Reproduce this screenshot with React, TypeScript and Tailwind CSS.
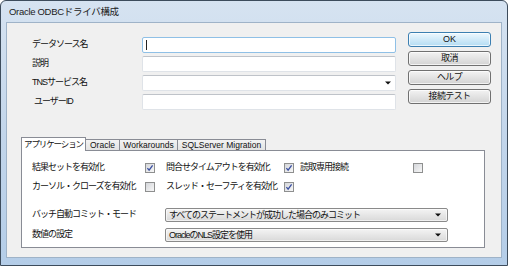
import React from "react";

type CheckRowItem = { label: string; checked: boolean };

const Arrow: React.FC = () => (
  <svg width="6" height="4" viewBox="0 0 6 4" className="shrink-0">
    <path d="M0 0.5h6L3 3.5z" fill="#111" />
  </svg>
);

const Checkbox: React.FC<{ checked: boolean }> = ({ checked }) => (
  <div className="flex h-[10px] w-[10px] shrink-0 items-center justify-center border border-[#8e8f8f] bg-gradient-to-br from-[#d4d6da] to-[#f7f7f7]">
    {checked && (
      <svg width="8" height="8" viewBox="0 0 8 8">
        <path d="M1.4 4.2 L3.1 6.2 L6.6 1.3" stroke="#3a4fa0" strokeWidth="1.3" fill="none" />
      </svg>
    )}
  </div>
);

const DialogButton: React.FC<{ label: string; primary?: boolean }> = ({ label, primary }) => (
  <div
    className={
      primary
        ? "flex h-[15px] w-[83px] items-center justify-center rounded-[3px] border border-[#3c7fb1] bg-gradient-to-b from-[#eef8fe] to-[#b3dcf3] text-[9px] leading-none shadow-[inset_0_0_0_1px_rgba(255,255,255,0.7)]"
        : "flex h-[15px] w-[83px] items-center justify-center rounded-[3px] border border-[#707070] bg-gradient-to-b from-[#f3f3f3] to-[#d3d3d3] text-[9px] leading-none tracking-[-0.6px] shadow-[inset_0_0_0_1px_rgba(255,255,255,0.7)]"
    }
  >
    {label}
  </div>
);

const TextBox: React.FC<{ focused?: boolean; combo?: boolean }> = ({ focused, combo }) => (
  <div
    className={
      focused
        ? "flex h-[16px] w-[254px] items-center rounded-[2px] border border-[#8fc0e6] bg-white px-[3px]"
        : "flex h-[16px] w-[254px] items-center justify-end rounded-[2px] border border-[#dfe3e8] border-t-[#bfc3c9] bg-white px-[4px]"
    }
  >
    {focused && <div className="h-[10px] w-px bg-[#222]" />}
    {combo && <Arrow />}
  </div>
);

const ComboBox: React.FC<{ value: string }> = ({ value }) => (
  <div className="flex h-[14px] w-[283px] items-center justify-between rounded-[2px] border border-[#8a8a8a] bg-gradient-to-b from-[#f4f4f4] to-[#d9d9d9] pl-[3px] pr-[6px] text-[9px] leading-none tracking-[-1px] shadow-[inset_0_0_0_1px_rgba(255,255,255,0.6)]">
    <span className="whitespace-nowrap">{value}</span>
    <Arrow />
  </div>
);

const fields = ["データソース名", "説明", "TNSサービス名", "ユーザーID"];
const buttons = ["OK", "取消", "ヘルプ", "接続テスト"];

const tabs = [
  { label: "アプリケーション", width: "w-[65px]", active: true },
  { label: "Oracle", width: "w-[35px]", active: false },
  { label: "Workarounds", width: "w-[59px]", active: false },
  { label: "SQLServer Migration", width: "w-[89px]", active: false },
];

const row1: CheckRowItem[] = [
  { label: "結果セットを有効化", checked: true },
  { label: "問合せタイムアウトを有効化", checked: true },
  { label: "読取専用接続", checked: false },
];

const row2: CheckRowItem[] = [
  { label: "カーソル・クローズを有効化", checked: false },
  { label: "スレッド・セーフティを有効化", checked: true },
];

const CheckRow: React.FC<{ items: CheckRowItem[] }> = ({ items }) => (
  <div className="flex h-[13px] items-center whitespace-nowrap">
    <span className="w-[113px] shrink-0 tracking-[-1px]">{items[0].label}</span>
    <Checkbox checked={items[0].checked} />
    <span className="ml-[11px] w-[118px] shrink-0 tracking-[-1px]">{items[1].label}</span>
    <Checkbox checked={items[1].checked} />
    {items[2] && (
      <>
        <span className="ml-[6px] w-[113px] shrink-0 tracking-[-1px]">{items[2].label}</span>
        <Checkbox checked={items[2].checked} />
      </>
    )}
  </div>
);

export default function App() {
  return (
    <div className="flex h-[266px] w-[508px] flex-col overflow-hidden rounded-t-[6px] border border-[#3d4c5c] bg-gradient-to-b from-[#d6e3f1] via-[#c3d6eb] to-[#b4cde8] px-[5px] pb-[7px] font-['Liberation_Sans','Noto_Sans_CJK_JP',sans-serif] text-[9px] text-[#111]">
      {/* Title bar */}
      <div className="flex h-[21px] shrink-0 items-center pl-[3px] pt-[2px] text-[9.5px] tracking-[-0.3px] text-[#1b1b1b]">
        Oracle ODBCドライバ構成
      </div>

      {/* Client area */}
      <div className="flex flex-1 flex-col border border-[#9fb3c8] bg-[#f0f0f0]">
        <div className="flex items-start">
          <div className="flex flex-col gap-[3px] pl-[25px] pt-[14px]">
            {fields.map((f, i) => (
              <div key={f} className="flex h-[16px] items-center">
                <span className={i === 3 ? "w-[110px] pl-[2px] tracking-[-1px]" : "w-[110px] tracking-[-1px]"}>{f}</span>
                <TextBox focused={i === 0} combo={i === 2} />
              </div>
            ))}
          </div>
          <div className="ml-[12px] flex flex-col gap-[4px] pt-[9px]">
            {buttons.map((b, i) => (
              <DialogButton key={b} label={b} primary={i === 0} />
            ))}
          </div>
        </div>

        {/* Tabs */}
        <div className="ml-[14px] mt-[27px] flex w-[464px] flex-col">
          <div className="flex h-[13px] items-end">
            {tabs.map((t) =>
              t.active ? (
                <div
                  key={t.label}
                  className={`${t.width} relative z-10 -mb-px flex h-[14px] items-center justify-center whitespace-nowrap border border-b-0 border-[#898c95] bg-white pb-[1px] text-[8.5px] leading-none tracking-[-1.1px]`}
                >
                  {t.label}
                </div>
              ) : (
                <div
                  key={t.label}
                  className={`${t.width} -ml-px flex h-[11px] items-center justify-center whitespace-nowrap border border-b-0 border-[#898c95] bg-gradient-to-b from-[#f3f3f3] to-[#e3e3e3] text-[8.5px] leading-none`}
                >
                  {t.label}
                </div>
              )
            )}
          </div>
          <div className="flex h-[98px] flex-col border border-[#898c95] bg-white pl-[10px] pt-[10px]">
            <div className="flex flex-col gap-[6px]">
              <CheckRow items={row1} />
              <CheckRow items={row2} />
            </div>
            <div className="mt-[15px] flex flex-col gap-[6px]">
              <div className="flex h-[14px] items-center">
                <span className="w-[133px] shrink-0 whitespace-nowrap tracking-[-1px]">バッチ自動コミット・モード</span>
                <ComboBox value="すべてのステートメントが成功した場合のみコミット" />
              </div>
              <div className="flex h-[14px] items-center">
                <span className="w-[133px] shrink-0 tracking-[-1px]">数値の設定</span>
                <ComboBox value="OracleのNLS設定を使用" />
              </div>
            </div>
          </div>
        </div>
      </div>
    </div>
  );
}
